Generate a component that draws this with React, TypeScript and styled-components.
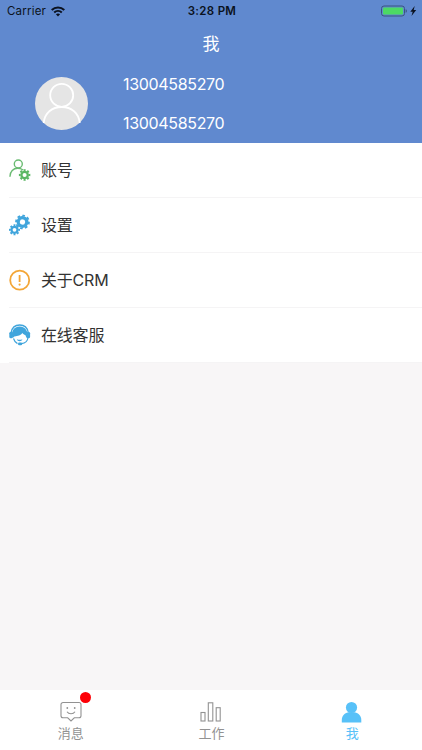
import React from 'react';
import styled, { createGlobalStyle } from 'styled-components';

const Global = createGlobalStyle`
  * { box-sizing: border-box; }
  body { margin: 0; background: #f8f6f7; }
`;

const Screen = styled.div`
  width: 422px;
  height: 750px;
  display: flex;
  flex-direction: column;
  overflow: hidden;
  background: #f8f6f7;
  font-family: Inter, 'Noto Sans CJK SC', sans-serif;
`;

const Header = styled.header`
  height: 143px;
  flex: none;
  background: #6089cf;
  color: #fff;
`;

const StatusBar = styled.div`
  height: 22px;
  display: grid;
  grid-template-columns: 1fr auto 1fr;
  align-items: center;
  padding: 0 5px 0 7px;
  color: #0b1220;
`;

const Carrier = styled.div`
  display: flex;
  align-items: center;
  gap: 5px;
  font-size: 11.5px;
  letter-spacing: 0.2px;
`;

const Clock = styled.div`
  font-size: 11.5px;
  font-weight: 600;
  letter-spacing: 0.3px;
`;

const Power = styled.div`
  display: flex;
  justify-content: flex-end;
`;

const Title = styled.h1`
  margin: 0;
  height: 43px;
  padding-top: 1px;
  line-height: 43px;
  font-size: 17px;
  font-weight: 400;
  text-align: center;
`;

const Profile = styled.div`
  display: flex;
  align-items: center;
  height: 77px;
  padding-left: 35px;
  gap: 35px;
`;

const Numbers = styled.div`
  display: flex;
  flex-direction: column;
  font-size: 16px;
  line-height: 39px;
  letter-spacing: -0.33px;
`;

const Menu = styled.main`
  background: #fff;
  flex: none;
`;

const Row = styled.div`
  height: 55px;
  display: flex;
  align-items: center;
  gap: 10px;
  margin-left: 9px;
  border-bottom: 1px solid #f5f4f5;
  color: #333;
  font-size: 16px;

  svg { flex: none; }
`;

const Label = styled.span`
  padding-bottom: 2px;
  letter-spacing: -0.2px;
`;

const Tabs = styled.nav`
  margin-top: auto;
  height: 60px;
  flex: none;
  display: grid;
  grid-template-columns: repeat(3, 1fr);
  background: #fff;
`;

const Tab = styled.div<{ $active?: boolean }>`
  display: flex;
  flex-direction: column;
  align-items: center;
  padding: 10px 0 0 1px;
  color: ${(p) => (p.$active ? '#58c1f8' : '#929292')};
  font-size: 13px;
  line-height: 19px;
`;

const TabIcon = styled.div`
  position: relative;
  width: 24px;
  height: 24px;

  svg { display: block; }
`;

const Badge = styled.span`
  position: absolute;
  left: 21px;
  top: -8px;
  width: 11px;
  height: 11px;
  border-radius: 50%;
  background: #fd0006;
`;

const Gear = ({ x, y, r, w, color, turn = 0 }: { x: number; y: number; r: number; w: number; color: string; turn?: number }) => (
  <g fill="none" stroke={color} transform={`rotate(${turn} ${x} ${y})`}>
    <circle cx={x} cy={y} r={r} strokeWidth={w} />
    <circle
      cx={x}
      cy={y}
      r={r + w / 2 + 0.5}
      strokeWidth="1.8"
      pathLength="16"
      strokeDasharray="1.1 0.9"
      strokeDashoffset="0.55"
    />
  </g>
);

const AccountIcon = () => (
  <svg width="22" height="22" viewBox="0 0 22 22">
    <g fill="none" stroke="#6abb72" strokeWidth="1.4" strokeLinecap="round">
      <circle cx="9.3" cy="5" r="4" />
      <path d="M1 17.3C1 12.4 4.3 9.200 8.700 9.200c2 0 3.600.5 5 1.500" />
    </g>
    <Gear x={15.6} y={16} r={3.2} w={2.3} color="#5cb765" />
  </svg>
);

const SettingsIcon = () => (
  <svg width="22" height="22" viewBox="0 0 22 22">
    <Gear x={13.5} y={8} r={4.3} w={3.3} color="#40a5dc" turn={10} />
    <Gear x={5.5} y={15.8} r={3} w={2.2} color="#40a5dc" />
  </svg>
);

const AboutIcon = () => (
  <svg width="22" height="22" viewBox="0 0 22 22">
    <circle cx="10.7" cy="11.2" r="9.5" fill="none" stroke="#f3a637" strokeWidth="1.8" />
    <path d="M10.6 6v7" stroke="#f3a637" strokeWidth="1.8" />
    <circle cx="10.600" cy="15.600" r="1.100" fill="#f3a637" />
  </svg>
);

const ServiceIcon = () => (
  <svg width="22" height="22" viewBox="0 0 22 22">
    <path d="M2.200 8.500C3 3.600 6.400 1 10.700 1s7.700 2.600 8.500 7.500" fill="none" stroke="#40a5dc" strokeWidth="1.300" />
    <path d="M3.800 14C1.300 8 4.800 2.600 10.700 2.600s9.400 5.400 6.900 11.400L16.300 11c-1.300-.2-2.200-.9-2.800-1.900C11.800 11.400 8.400 12.500 5.200 12.400z" fill="#40a5dc" />
    <rect x="0.300" y="7.700" width="3.600" height="6.600" rx="1.600" fill="#40a5dc" />
    <rect x="17.500" y="7.700" width="3.600" height="6.600" rx="1.600" fill="#40a5dc" />
    <path d="M4.500 14.500c.8 2.600 2.300 4.300 4 5.100M19 13.500c-.4 3.300-2.500 5.800-6.500 6.200" fill="none" stroke="#40a5dc" strokeWidth="1.200" />
    <path d="M7.800 15.200c1.600.7 4 .7 5.600 0-.6 2.600-5 2.600-5.600 0z" fill="#40a5dc" />
    <rect x="9" y="18.400" width="4.200" height="2.800" rx="1.300" fill="#40a5dc" />
  </svg>
);

const rows = [
  { label: '账号', icon: <AccountIcon /> },
  { label: '设置', icon: <SettingsIcon /> },
  { label: '关于CRM', icon: <AboutIcon /> },
  { label: '在线客服', icon: <ServiceIcon /> },
];

export default function App() {
  return (
    <Screen>
      <Global />
      <Header>
        <StatusBar>
          <Carrier>
            Carrier
            <svg width="14" height="11" viewBox="0 0 14 11">
              <g fill="none" stroke="#0b1220" strokeWidth="2.100">
                <path d="M.7 4C4.300.600 9.700.600 13.300 4" />
                <path d="M3.200 6.500c2.200-2 5.400-2 7.600 0" />
              </g>
              <path d="M4.900 8.300c1.200-1 3-1 4.200 0L7 10.500z" fill="#0b1220" />
            </svg>
          </Carrier>
          <Clock>3:28 PM</Clock>
          <Power>
            <svg width="37" height="12" viewBox="0 0 37 12">
              <rect x="1.500" y="1" width="23" height="10" rx="2.500" fill="none" stroke="#3a557f" />
              <rect x="3" y="2.500" width="20" height="7" rx="1" fill="#4cd964" />
              <path d="M25.600 4.200q1.300.300 1.300 1.800t-1.300 1.800z" fill="#3a557f" />
              <path d="M34.700 1 30.300 6.700h2.400L31.500 11l4.700-6h-2.500z" fill="#0b1220" />
            </svg>
          </Power>
        </StatusBar>
        <Title>我</Title>
        <Profile>
          <svg width="53" height="53" viewBox="0 0 53 53">
            <circle cx="26.500" cy="26.500" r="26.500" fill="#e5e5e5" />
            <g fill="none" stroke="#fff" strokeWidth="1.800">
              <circle cx="26.700" cy="18.300" r="11.500" />
              <path d="M8.700 46C9.500 36 17 30 26.700 30s17.200 6 18 16" />
            </g>
          </svg>
          <Numbers>
            <span>13004585270</span>
            <span>13004585270</span>
          </Numbers>
        </Profile>
      </Header>
      <Menu>
        {rows.map((row) => (
          <Row key={row.label}>
            {row.icon}
            <Label>{row.label}</Label>
          </Row>
        ))}
      </Menu>
      <Tabs>
        <Tab>
          <TabIcon>
            <svg width="24" height="24" viewBox="0 0 24 24" fill="none" stroke="#929292" strokeWidth="1.100">
              <path d="M4 2.500h16a2 2 0 0 1 2 2v11.300a2 2 0 0 1-2 2h-4.700L12 21l-3.300-3.200H4a2 2 0 0 1-2-2V4.500a2 2 0 0 1 2-2z" />
              <path d="M8 11.800c1.800 2.600 6.200 2.600 8 0" />
              <circle cx="8.300" cy="8" r=".9" fill="#929292" stroke="none" />
              <circle cx="15.700" cy="8" r=".9" fill="#929292" stroke="none" />
            </svg>
            <Badge />
          </TabIcon>
          消息
        </Tab>
        <Tab>
          <TabIcon>
            <svg width="24" height="24" viewBox="0 0 24 24" fill="none" stroke="#929292" strokeWidth="1.100">
              <rect x="2" y="12.500" width="4" height="8.500" />
              <rect x="9.300" y="2.800" width="4.500" height="18.200" />
              <rect x="17.200" y="7.700" width="4" height="13.300" />
            </svg>
          </TabIcon>
          工作
        </Tab>
        <Tab $active>
          <TabIcon>
            <svg width="24" height="24" viewBox="0 0 24 24" fill="#58c1f8">
              <circle cx="11.500" cy="7.500" r="5.600" />
              <path d="M1.800 22.500V20c0-4.200 2.600-6.800 6.500-7.800h6.500c3.900 1 6.500 3.600 6.500 7.800v2.500z" />
            </svg>
          </TabIcon>
          我
        </Tab>
      </Tabs>
    </Screen>
  );
}
